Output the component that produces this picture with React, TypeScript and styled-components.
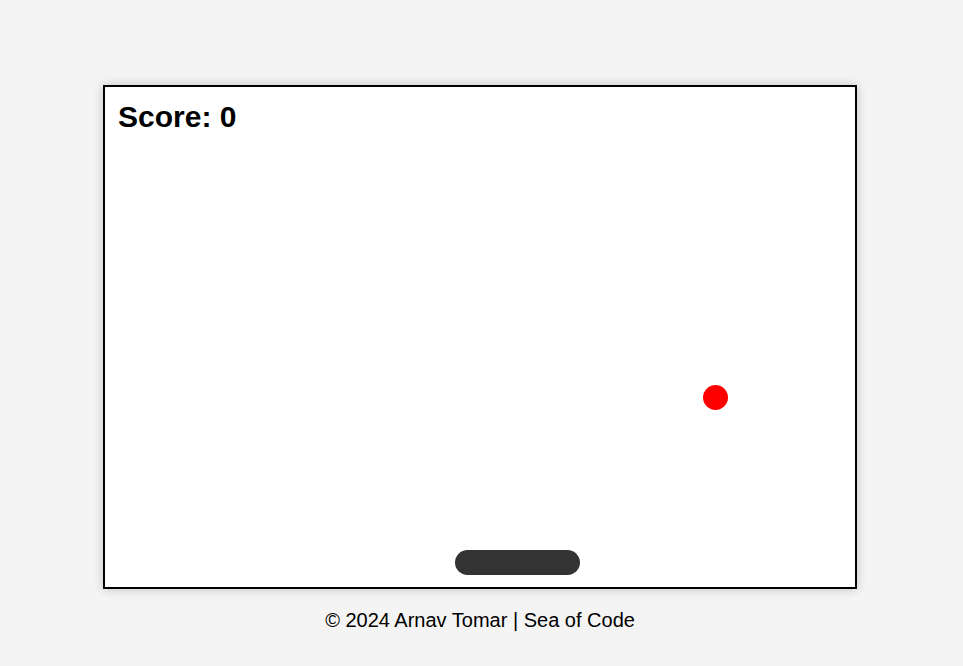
import React from "react";
import styled, { createGlobalStyle } from "styled-components";

const Global = createGlobalStyle`
  html, body { margin: 0; padding: 0; }
  body {
    background: #f4f4f4;
    font-family: "Liberation Sans", Arial, sans-serif;
    color: #000;
  }
`;

const Page = styled.div`
  display: flex;
  flex-direction: column;
  align-items: center;
  padding-top: 85px;
`;

const Board = styled.div`
  position: relative;
  width: 750px;
  height: 500px;
  background: #fff;
  border: 2px solid #000;
  box-shadow: 0 0 10px rgba(0, 0, 0, 0.2);
  margin-left: -3px;
  overflow: hidden;
`;

const Score = styled.div`
  position: absolute;
  top: 13px;
  left: 13px;
  font-size: 30px;
  font-weight: bold;
`;

const Ball = styled.div`
  position: absolute;
  width: 25px;
  height: 25px;
  border-radius: 50%;
  background: red;
`;

const Paddle = styled.div`
  position: absolute;
  width: 125px;
  height: 25px;
  border-radius: 12.5px;
  background: #333;
  bottom: 12px;
`;

const Footer = styled.footer`
  margin-top: 20px;
  margin-left: -3px;
  font-size: 20px;
  text-align: center;
`;

export default function App() {
  const ball = { x: 597.5, y: 297.5 };
  const paddleX = 350;
  return (
    <>
      <Global />
      <Page>
        <Board>
          <Score>Score: 0</Score>
          <Ball style={{ left: ball.x, top: ball.y }} />
          <Paddle style={{ left: paddleX }} />
        </Board>
        <Footer>© 2024 Arnav Tomar | Sea of Code</Footer>
      </Page>
    </>
  );
}
